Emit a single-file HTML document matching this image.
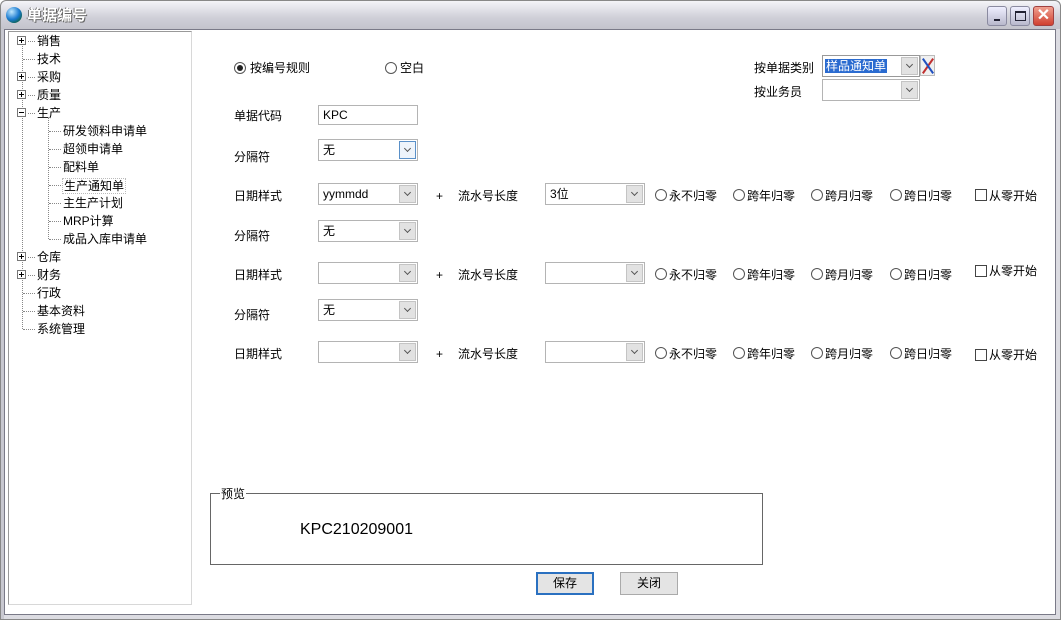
<!DOCTYPE html><html><head><meta charset="utf-8"><style>
*{margin:0;padding:0;box-sizing:border-box}
body{width:1061px;height:620px;overflow:hidden;background:#fff;font-family:"Liberation Sans","Noto Sans CJK SC",sans-serif;font-size:12px;color:#000;position:relative}
.a{position:absolute;white-space:nowrap;line-height:14px}
.cb{position:absolute;height:22px;border:1px solid #b4b4b4;background:#fff;padding:2px 4px;line-height:16px}
.cb i{position:absolute;right:1px;top:1px;width:17px;height:18px;background:#e2e2e2;border:1px solid #c4c4c4}
.cb i:after{content:"";position:absolute;left:5px;top:4px;width:4px;height:4px;border-right:1px solid #555;border-bottom:1px solid #555;transform:rotate(45deg)}
.r{position:absolute;width:12px;height:12px;border:1px solid #555;border-radius:50%;background:#fff}
.ck{position:absolute;width:12px;height:12px;border:1px solid #444;background:#fff}
.pl{position:absolute;width:9px;height:9px;border:1px solid #777;background:#fff}
.pl:before{content:"";position:absolute;left:1px;top:3px;width:5px;height:1px;background:#000}
.pl.p:after{content:"";position:absolute;left:3px;top:1px;width:1px;height:5px;background:#000}
.dh{position:absolute;border-top:1px dotted #888;height:0}
.dv{position:absolute;border-left:1px dotted #888;width:0}
</style></head><body>
<!-- window frame -->
<div style="position:absolute;left:0;top:0;width:1061px;height:620px;border:1px solid #888;border-radius:6px 6px 0 0;background:#dcdce2"></div>
<div style="position:absolute;left:1px;top:1px;width:1059px;height:28px;border-radius:6px 6px 0 0;background:linear-gradient(#f4f4f8,#cfcfd8 60%,#c4c4cc)"></div>
<div style="position:absolute;left:6px;top:7px;width:16px;height:16px;border-radius:50%;background:radial-gradient(circle at 35% 30%,#bfe8ff,#1a7ad0 50%,#0b5a20 90%)"></div>
<div class="a" style="left:27px;top:7px;font-size:15px;line-height:18px;font-weight:bold;color:#fff;text-shadow:1px 1px 0 #666,-1px 0 0 #777">单据编号</div>
<div style="position:absolute;left:987px;top:6px;width:20px;height:20px;border:1px solid #8a8aa0;border-radius:3px;background:linear-gradient(#eef,#b8b8cc)"><div style="position:absolute;left:6px;top:12px;width:6px;height:2px;background:#223"></div></div>
<div style="position:absolute;left:1010px;top:6px;width:20px;height:20px;border:1px solid #8a8aa0;border-radius:3px;background:linear-gradient(#eef,#b8b8cc)"><div style="position:absolute;left:4px;top:4px;width:11px;height:10px;border:2px solid #223;border-width:2px 1px 1px 1px"></div></div>
<div style="position:absolute;left:1033px;top:6px;width:21px;height:20px;border:1px solid #a04040;border-radius:3px;background:linear-gradient(#f0a090,#d04030);color:#fff;font-size:16px;line-height:18px;text-align:center;font-weight:bold">✕</div>
<div style="position:absolute;left:4px;top:29px;width:1052px;height:586px;background:#fff;border:1px solid #7a7a88"></div>
<div style="position:absolute;left:1px;top:29px;width:3px;height:590px;background:#c8c8d0"></div>
<!-- tree panel -->
<div style="position:absolute;left:8px;top:31px;width:184px;height:574px;border:1px solid #d8d8d8;border-left-color:#999;border-top-color:#999"></div>
<div class="dv" style="left:22px;top:41px;height:288px"></div>
<div class="dv" style="left:48px;top:118px;height:121px"></div>
<div class="pl p" style="left:17px;top:36px"></div><div class="dh" style="left:28px;top:41px;width:7px"></div><div class="a" style="left:37px;top:34px">销售</div>
<div class="dh" style="left:23px;top:59px;width:12px"></div><div class="a" style="left:37px;top:52px">技术</div>
<div class="pl p" style="left:17px;top:72px"></div><div class="dh" style="left:28px;top:77px;width:7px"></div><div class="a" style="left:37px;top:70px">采购</div>
<div class="pl p" style="left:17px;top:90px"></div><div class="dh" style="left:28px;top:95px;width:7px"></div><div class="a" style="left:37px;top:88px">质量</div>
<div class="pl" style="left:17px;top:108px"></div><div class="dh" style="left:28px;top:113px;width:7px"></div><div class="a" style="left:37px;top:106px">生产</div>
<div class="dh" style="left:49px;top:131px;width:12px"></div><div class="a" style="left:63px;top:124px">研发领料申请单</div>
<div class="dh" style="left:49px;top:149px;width:12px"></div><div class="a" style="left:63px;top:142px">超领申请单</div>
<div class="dh" style="left:49px;top:167px;width:12px"></div><div class="a" style="left:63px;top:160px">配料单</div>
<div class="dh" style="left:49px;top:185px;width:12px"></div><div class="a" style="left:62px;top:178px;border:1px dotted #bbb;padding:0 1px">生产通知单</div>
<div class="dh" style="left:49px;top:203px;width:12px"></div><div class="a" style="left:63px;top:196px">主生产计划</div>
<div class="dh" style="left:49px;top:221px;width:12px"></div><div class="a" style="left:63px;top:214px">MRP计算</div>
<div class="dh" style="left:49px;top:239px;width:12px"></div><div class="a" style="left:63px;top:232px">成品入库申请单</div>
<div class="pl p" style="left:17px;top:252px"></div><div class="dh" style="left:28px;top:257px;width:7px"></div><div class="a" style="left:37px;top:250px">仓库</div>
<div class="pl p" style="left:17px;top:270px"></div><div class="dh" style="left:28px;top:275px;width:7px"></div><div class="a" style="left:37px;top:268px">财务</div>
<div class="dh" style="left:23px;top:293px;width:12px"></div><div class="a" style="left:37px;top:286px">行政</div>
<div class="dh" style="left:23px;top:311px;width:12px"></div><div class="a" style="left:37px;top:304px">基本资料</div>
<div class="dh" style="left:23px;top:329px;width:12px"></div><div class="a" style="left:37px;top:322px">系统管理</div>
<!-- top options -->
<div class="r" style="left:234px;top:62px"><div style="position:absolute;left:2px;top:2px;width:6px;height:6px;border-radius:50%;background:#222"></div></div>
<div class="a" style="left:250px;top:61px">按编号规则</div>
<div class="r" style="left:385px;top:62px"></div><div class="a" style="left:400px;top:61px">空白</div>
<div class="a" style="left:754px;top:61px">按单据类别</div>
<div class="cb" style="left:822px;top:55px;width:98px;border-color:#999"><span style="background:#2a6bd0;color:#fff;padding:0 1px;margin-left:-2px">样品通知单</span><i></i></div>
<div style="position:absolute;left:920px;top:55px;width:15px;height:21px;border:1px solid #bbb;background:#f0f0f0"><div style="position:absolute;left:6px;top:1px;width:2px;height:18px;background:#c03030;transform:rotate(35deg)"></div><div style="position:absolute;left:6px;top:1px;width:2px;height:18px;background:#2050c0;transform:rotate(-35deg)"></div></div>
<div class="a" style="left:754px;top:85px">按业务员</div>
<div class="cb" style="left:822px;top:79px;width:98px"><i></i></div>
<!-- form -->
<div class="a" style="left:234px;top:109px">单据代码</div>
<div class="cb" style="left:318px;top:105px;width:100px;height:20px;padding-top:1px">KPC</div>
<div class="a" style="left:234px;top:150px">分隔符</div>
<div class="cb" style="left:318px;top:139px;width:100px">无<i style="border-color:#5a90c8;background:#eef4fb"></i></div>

<div class="a" style="left:234px;top:189px">日期样式</div>
<div class="cb" style="left:318px;top:183px;width:100px">yymmdd<i></i></div>
<div class="a" style="left:436px;top:189px">+</div><div class="a" style="left:458px;top:189px">流水号长度</div>
<div class="cb" style="left:545px;top:183px;width:100px">3位<i></i></div>
<div class="a" style="left:234px;top:229px">分隔符</div>
<div class="cb" style="left:318px;top:220px;width:100px">无<i></i></div>

<div class="a" style="left:234px;top:268px">日期样式</div>
<div class="cb" style="left:318px;top:262px;width:100px"><i></i></div>
<div class="a" style="left:436px;top:268px">+</div><div class="a" style="left:458px;top:268px">流水号长度</div>
<div class="cb" style="left:545px;top:262px;width:100px"><i></i></div>
<div class="a" style="left:234px;top:308px">分隔符</div>
<div class="cb" style="left:318px;top:299px;width:100px">无<i></i></div>

<div class="a" style="left:234px;top:347px">日期样式</div>
<div class="cb" style="left:318px;top:341px;width:100px"><i></i></div>
<div class="a" style="left:436px;top:347px">+</div><div class="a" style="left:458px;top:347px">流水号长度</div>
<div class="cb" style="left:545px;top:341px;width:100px"><i></i></div>

<!-- radio rows -->
<div style="position:absolute;left:0;top:189px">
<div class="r" style="left:655px;top:0"></div><div class="a" style="left:669px;top:0">永不归零</div>
<div class="r" style="left:733px;top:0"></div><div class="a" style="left:747px;top:0">跨年归零</div>
<div class="r" style="left:811px;top:0"></div><div class="a" style="left:825px;top:0">跨月归零</div>
<div class="r" style="left:890px;top:0"></div><div class="a" style="left:904px;top:0">跨日归零</div>
<div class="ck" style="left:975px;top:0"></div><div class="a" style="left:989px;top:0">从零开始</div></div>
<div style="position:absolute;left:0;top:268px">
<div class="r" style="left:655px;top:0"></div><div class="a" style="left:669px;top:0">永不归零</div>
<div class="r" style="left:733px;top:0"></div><div class="a" style="left:747px;top:0">跨年归零</div>
<div class="r" style="left:811px;top:0"></div><div class="a" style="left:825px;top:0">跨月归零</div>
<div class="r" style="left:890px;top:0"></div><div class="a" style="left:904px;top:0">跨日归零</div>
<div class="ck" style="left:975px;top:-3px"></div><div class="a" style="left:989px;top:-4px">从零开始</div></div>
<div style="position:absolute;left:0;top:347px">
<div class="r" style="left:655px;top:0"></div><div class="a" style="left:669px;top:0">永不归零</div>
<div class="r" style="left:733px;top:0"></div><div class="a" style="left:747px;top:0">跨年归零</div>
<div class="r" style="left:811px;top:0"></div><div class="a" style="left:825px;top:0">跨月归零</div>
<div class="r" style="left:890px;top:0"></div><div class="a" style="left:904px;top:0">跨日归零</div>
<div class="ck" style="left:975px;top:2px"></div><div class="a" style="left:989px;top:1px">从零开始</div></div>

<!-- preview -->
<div style="position:absolute;left:210px;top:493px;width:553px;height:72px;border:1px solid #666"></div>
<div class="a" style="left:220px;top:487px;background:#fff;padding:0 1px">预览</div>
<div class="a" style="left:300px;top:521px;font-size:16px;line-height:18px">KPC210209001</div>
<!-- buttons -->
<div style="position:absolute;left:536px;top:572px;width:58px;height:23px;border:2px solid #2a70c0;background:#e4e4e4;text-align:center;line-height:19px">保存</div>
<div style="position:absolute;left:620px;top:572px;width:58px;height:23px;border:1px solid #aaa;background:#e4e4e4;text-align:center;line-height:21px">关闭</div>
</body></html>
